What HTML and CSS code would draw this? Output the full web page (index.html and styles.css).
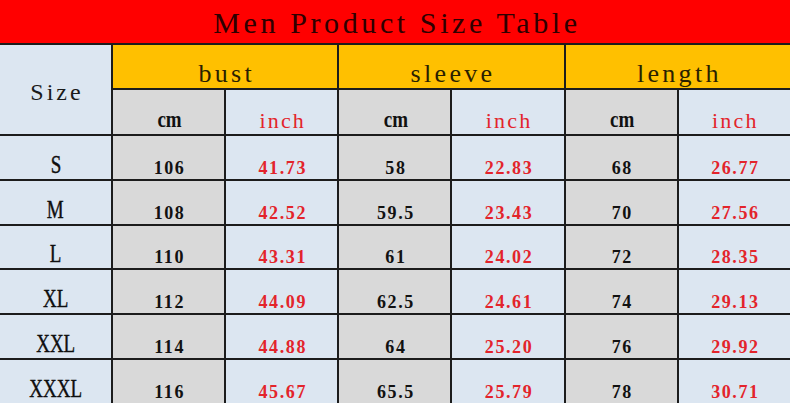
FILE: index.html
```html
<!DOCTYPE html>
<html>
<head>
<meta charset="utf-8">
<link rel="stylesheet" href="styles.css">
</head>
<body>
<div class="table">
  <div class="title">Men Product Size Table</div>
  <div class="size-head">Size</div>
  <div class="group">bust</div>
  <div class="group">sleeve</div>
  <div class="group">length</div>
  <div class="unit grey"><span class="cm">cm</span></div>
  <div class="unit blue red">inch</div>
  <div class="unit grey"><span class="cm">cm</span></div>
  <div class="unit blue red">inch</div>
  <div class="unit grey"><span class="cm">cm</span></div>
  <div class="unit blue red">inch</div>

  <div class="sz"><span class="narrow">S</span></div>
  <div class="num grey">106</div>
  <div class="num blue red">41.73</div>
  <div class="num grey">58</div>
  <div class="num blue red">22.83</div>
  <div class="num grey">68</div>
  <div class="num blue red">26.77</div>

  <div class="sz"><span class="narrow">M</span></div>
  <div class="num grey">108</div>
  <div class="num blue red">42.52</div>
  <div class="num grey">59.5</div>
  <div class="num blue red">23.43</div>
  <div class="num grey">70</div>
  <div class="num blue red">27.56</div>

  <div class="sz"><span class="narrow">L</span></div>
  <div class="num grey">110</div>
  <div class="num blue red">43.31</div>
  <div class="num grey">61</div>
  <div class="num blue red">24.02</div>
  <div class="num grey">72</div>
  <div class="num blue red">28.35</div>

  <div class="sz"><span class="narrow">XL</span></div>
  <div class="num grey">112</div>
  <div class="num blue red">44.09</div>
  <div class="num grey">62.5</div>
  <div class="num blue red">24.61</div>
  <div class="num grey">74</div>
  <div class="num blue red">29.13</div>

  <div class="sz"><span class="narrow">XXL</span></div>
  <div class="num grey">114</div>
  <div class="num blue red">44.88</div>
  <div class="num grey">64</div>
  <div class="num blue red">25.20</div>
  <div class="num grey">76</div>
  <div class="num blue red">29.92</div>

  <div class="sz"><span class="narrow">XXXL</span></div>
  <div class="num grey">116</div>
  <div class="num blue red">45.67</div>
  <div class="num grey">65.5</div>
  <div class="num blue red">25.79</div>
  <div class="num grey">78</div>
  <div class="num blue red">30.71</div>
</div>
</body>
</html>
```
FILE: styles.css
```css
html, body {
  margin: 0;
  padding: 0;
  background: #dce6f1;
}
.table {
  width: 790px;
  height: 403px;
  display: grid;
  grid-template-columns: 111px repeat(6, 1fr);
  grid-template-rows: 43px 43px 44px repeat(6, 1fr);
  gap: 2px;
  background: #1c1c1c;
  font-family: "Liberation Serif", "Times New Roman", serif;
  color: #111;
  overflow: hidden;
}
.table > div {
  display: flex;
  justify-content: center;
  align-items: flex-end;
  overflow: hidden;
  white-space: pre;
}
.title {
  grid-column: 1 / -1;
  background: #ff0000;
  color: #2e0000;
  font-size: 30px;
  line-height: 30px;
  letter-spacing: 3.6px;
  padding-bottom: 5px;
  padding-left: 4px;
}
.size-head {
  grid-row: span 2;
  background: #dce6f1;
  font-size: 24px;
  line-height: 26px;
  letter-spacing: 3px;
  align-items: center !important;
  padding-top: 4px;
  padding-left: 3px;
  color: #1a1a1a;
}
.group {
  grid-column: span 2;
  background: #ffc000;
  color: #2a1f00;
  font-size: 26px;
  line-height: 26px;
  letter-spacing: 3.3px;
  padding-bottom: 1px;
  padding-left: 3px;
}
.unit {
  font-size: 22px;
  line-height: 22px;
  letter-spacing: 2.2px;
  padding-bottom: 2px;
  padding-left: 2px;
}
.cm {
  display: inline-block;
  font-size: 19px;
  font-weight: bold;
  letter-spacing: 0;
  color: #111;
  transform: scaleY(1.25);
  transform-origin: 50% 78%;
}
.grey { background: #d9d9d9; }
.blue { background: #dce6f1; }
.red { color: #e3242b; }
.sz {
  background: #dce6f1;
  padding-bottom: 1px;
}
.narrow {
  display: inline-block;
  font-size: 25px;
  line-height: 26px;
  font-weight: normal;
  transform: scaleX(0.76);
  color: #0f0f0f;
  -webkit-text-stroke: 0.4px #0f0f0f;
}
.num {
  font-size: 18px;
  line-height: 20px;
  font-weight: bold;
  letter-spacing: 1.6px;
  padding-bottom: 1px;
  padding-left: 2px;
}
.red.num { color: #e3242b; }
```
